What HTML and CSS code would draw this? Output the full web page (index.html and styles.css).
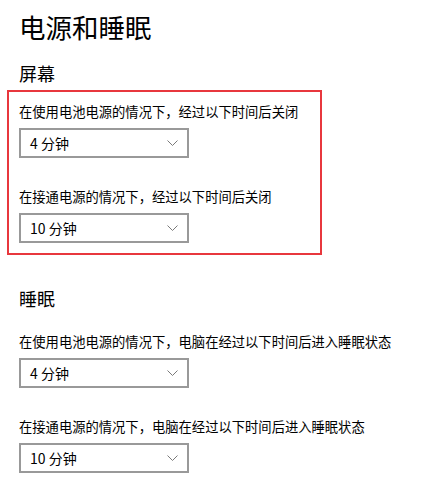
FILE: index.html
```html
<!DOCTYPE html>
<html lang="zh-CN">
<head>
<meta charset="utf-8">
<link rel="stylesheet" href="styles.css">
</head>
<body>
<div class="page">
  <h1 class="title">电源和睡眠</h1>
  <h2 class="heading">屏幕</h2>
  <div class="highlight">
    <div class="setting">
      <div class="label">在使用电池电源的情况下，经过以下时间后关闭</div>
      <div class="select"><span class="value">4 分钟</span><svg class="chev" width="11" height="6" viewBox="0 0 11 6"><path d="M0.5 0.5 L5.5 5.5 L10.5 0.5" fill="none" stroke="#7a7a7a" stroke-width="1"/></svg></div>
    </div>
    <div class="setting">
      <div class="label">在接通电源的情况下，经过以下时间后关闭</div>
      <div class="select"><span class="value">10 分钟</span><svg class="chev" width="11" height="6" viewBox="0 0 11 6"><path d="M0.5 0.5 L5.5 5.5 L10.5 0.5" fill="none" stroke="#7a7a7a" stroke-width="1"/></svg></div>
    </div>
  </div>
  <h2 class="heading sleep">睡眠</h2>
  <div class="group">
    <div class="setting">
      <div class="label">在使用电池电源的情况下，电脑在经过以下时间后进入睡眠状态</div>
      <div class="select"><span class="value">4 分钟</span><svg class="chev" width="11" height="6" viewBox="0 0 11 6"><path d="M0.5 0.5 L5.5 5.5 L10.5 0.5" fill="none" stroke="#7a7a7a" stroke-width="1"/></svg></div>
    </div>
    <div class="setting">
      <div class="label">在接通电源的情况下，电脑在经过以下时间后进入睡眠状态</div>
      <div class="select"><span class="value">10 分钟</span><svg class="chev" width="11" height="6" viewBox="0 0 11 6"><path d="M0.5 0.5 L5.5 5.5 L10.5 0.5" fill="none" stroke="#7a7a7a" stroke-width="1"/></svg></div>
    </div>
  </div>
</div>
</body>
</html>
```
FILE: styles.css
```css
html, body {
  margin: 0;
  padding: 0;
  background: #ffffff;
}
body {
  font-family: "Noto Sans CJK SC", "Noto Sans", sans-serif;
  color: #000000;
}
.page {
  padding: 9px 0 0 19px;
}
.title {
  margin: 0;
  font-size: 26.5px;
  font-weight: 400;
  line-height: 36px;
}
.heading {
  margin: 16px 0 0 0;
  font-size: 18px;
  font-weight: 400;
  line-height: 24px;
}
.highlight {
  margin: 5px 0 0 -12px;
  width: 291px;
  border: 2px solid #e8373d;
  padding: 12px 10px 10px 10px;
  display: flex;
  flex-direction: column;
  gap: 31px;
}
.heading.sleep {
  margin-top: 31px;
}
.group {
  margin-top: 24px;
  display: flex;
  flex-direction: column;
  gap: 31px;
}
.setting {
  display: flex;
  flex-direction: column;
  gap: 8px;
}
.label {
  font-size: 13.3px;
  line-height: 16px;
  white-space: nowrap;
}
.select {
  box-sizing: border-box;
  width: 170px;
  height: 30px;
  border: 2px solid #999999;
  display: flex;
  align-items: center;
  justify-content: space-between;
  padding: 0 9px 0 9px;
}
.value {
  font-size: 14px;
  line-height: 18px;
}
.chev {
  display: block;
}
```
